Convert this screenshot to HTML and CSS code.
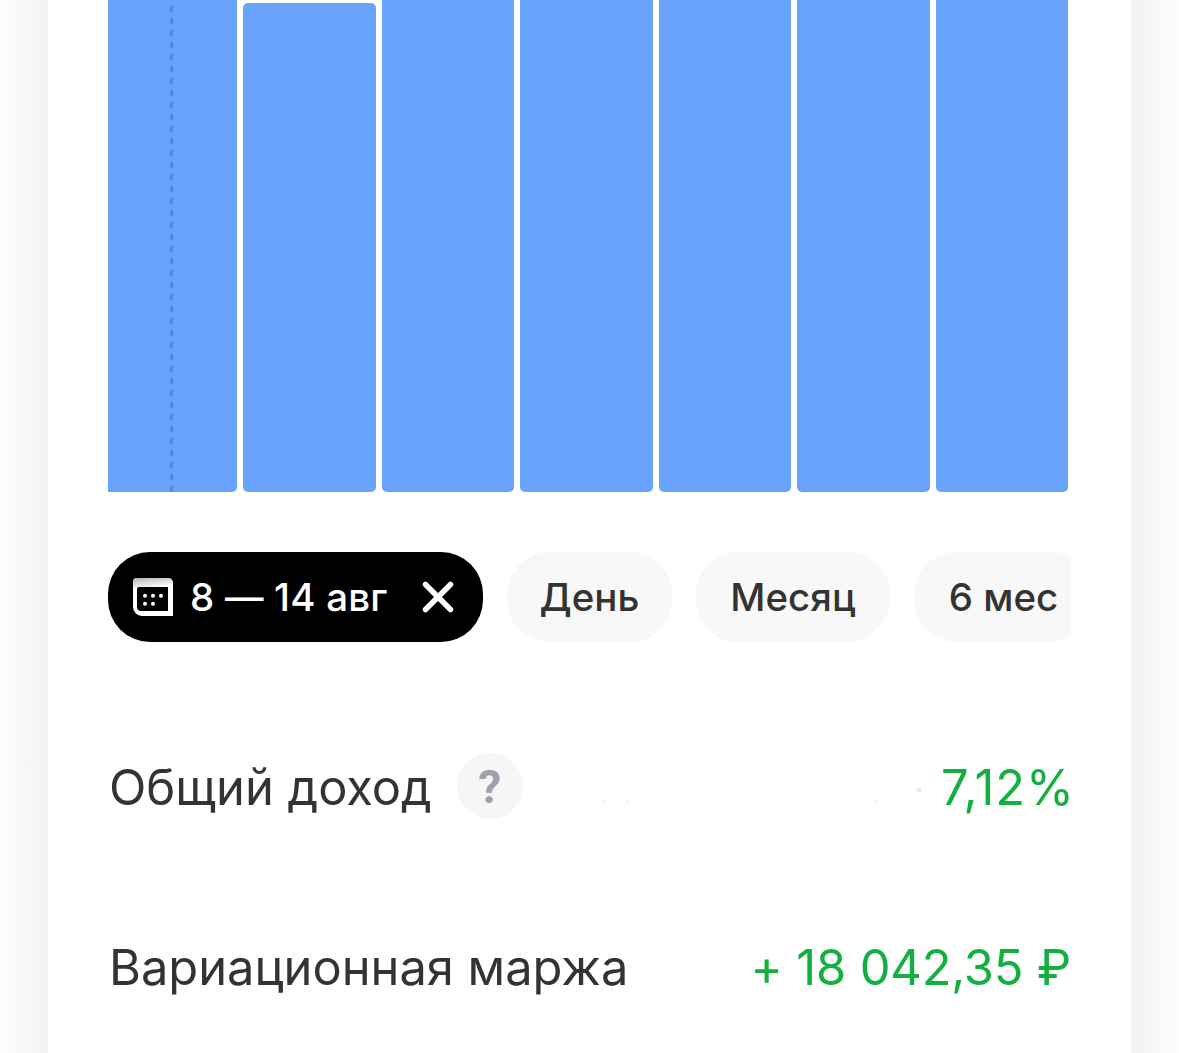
FILE: index.html
```html
<!DOCTYPE html>
<html lang="en">
<head>
  <meta charset="UTF-8">
  <title>Общий доход</title>
  <link rel="stylesheet" href="styles.css">
</head>
<body>

  <div class="card">
    <div class="chart">
      <div class="bar bar-first"><span class="today-line"></span></div>
      <div class="bar bar-short"></div>
      <div class="bar"></div>
      <div class="bar"></div>
      <div class="bar"></div>
      <div class="bar"></div>
      <div class="bar"></div>
    </div>

    <div class="pills">
      <div class="pill pill-active">
        <svg class="cal-icon" width="40" height="38" viewBox="0 0 40 38">
          <defs>
            <linearGradient id="calTop" x1="0" y1="0" x2="0.5" y2="1">
              <stop offset="0" stop-color="#b4b4b4"/>
              <stop offset="1" stop-color="#fff"/>
            </linearGradient>
          </defs>
          <path d="M4 0H35a5 5 0 0 1 5 5V38H9a9 9 0 0 1-9-9V4a4 4 0 0 1 4-4Z" fill="#fff"/>
          <path d="M4 0H35a5 5 0 0 1 5 5V10H0V4a4 4 0 0 1 4-4Z" fill="url(#calTop)"/>
          <path d="M6 9H35V33H8a4 4 0 0 1-4-4V11a2 2 0 0 1 2-2Z" fill="#000"/>
          <g fill="#fff">
            <circle cx="12" cy="17.7" r="2"/>
            <circle cx="20" cy="17.7" r="2"/>
            <circle cx="28" cy="17.7" r="2"/>
            <circle cx="12" cy="25.7" r="2"/>
            <circle cx="20" cy="25.7" r="2"/>
          </g>
        </svg>
        <span class="pill-text">8 — 14 авг</span>
        <svg class="close-icon" width="32" height="32" viewBox="0 0 32 32">
          <path d="M3.5 3.5L28.5 28.5M28.5 3.5L3.5 28.5" stroke="#fff" stroke-width="5.5" stroke-linecap="round"/>
        </svg>
      </div>
      <div class="pill">День</div>
      <div class="pill pill-wide">Месяц</div>
      <div class="pill pill-wide">6 мес</div>
    </div>

    <div class="row row-income">
      <div class="row-label">
        <span class="row-text">Общий доход</span>
        <span class="help">?</span>
      </div>
      <svg class="specks" width="340" height="30" viewBox="0 0 340 30">
        <circle cx="9" cy="20" r="2" fill="#f4f6f5"/>
        <circle cx="32" cy="21" r="2" fill="#f4f6f5"/>
        <circle cx="280" cy="20" r="2" fill="#f4f6f5"/>
        <circle cx="324" cy="9" r="2.5" fill="#e6eeea"/>
      </svg>
      <span class="row-text row-value row-percent">7,12%</span>
    </div>

    <div class="row row-margin">
      <span class="row-text row-name">Вариационная маржа</span>
      <span class="row-text row-value row-sum">+ 18 042,35 ₽</span>
    </div>
  </div>

</body>
</html>
```

FILE: styles.css
```css
html, body {
  height: 100%;
}

body {
  margin: 0;
  font-family: Inter, "Noto Sans", sans-serif;
  overflow: hidden;
  background:
    linear-gradient(to right, #fdfdfd, #f2f2f2) left top / 48px 100% no-repeat,
    linear-gradient(to left, #fdfdfd, #f2f2f2) right top / 48px 100% no-repeat,
    #fff;
}

.card {
  width: 1083px;
  height: 1053px;
  margin-left: 48px;
  padding: 0 60px;
  box-sizing: border-box;
  background: #fff;
}

.chart {
  display: flex;
  gap: 6.4px;
  width: 960px;
  height: 492px;
}

.bar {
  flex: 1;
  background: #6aa3fb;
  border-radius: 0 0 5px 5px;
}

.bar-first {
  flex: 0 0 129px;
  position: relative;
  border-radius: 0 0 5px 0;
}

.bar-short {
  margin-top: 3px;
  border-radius: 5px;
}

.today-line {
  position: absolute;
  left: 62px;
  top: 6px;
  bottom: 0;
  width: 3px;
  background: repeating-linear-gradient(#5189e2 0, #5189e2 6px, transparent 6px, transparent 12px);
}

.pills {
  display: flex;
  gap: 24px;
  width: 963px;
  margin-top: 60px;
  overflow: hidden;
}

.pill {
  flex: none;
  height: 90px;
  padding: 0 32.5px;
  display: flex;
  align-items: center;
  background: #f8f8f8;
  border-radius: 42px;
  color: #333;
  font-size: 38.5px;
  font-weight: 500;
}

.pill-wide {
  padding: 0 34.5px;
}

.pill-active {
  width: 375px;
  padding: 0 29px 0 25px;
  box-sizing: border-box;
  background: #000;
  color: #fff;
}

.pill-text {
  margin-left: 17px;
  flex: 1;
  letter-spacing: 0.2px;
}

.row {
  position: relative;
  display: flex;
  justify-content: space-between;
  align-items: center;
  color: #333;
  font-size: 48.8px;
  width: 963px;
}

.row-label {
  display: flex;
  align-items: center;
  gap: 25px;
  margin-left: 1px;
}

.row-text {
  padding-top: 2px;
}

.row-income {
  margin-top: 111px;
  height: 66px;
}

.row-margin {
  margin-top: 114px;
  height: 66px;
}

.row-name {
  margin-left: 1px;
}

.help {
  width: 66px;
  height: 66px;
  padding-top: 2px;
  box-sizing: border-box;
  border-radius: 50%;
  background: #f6f6f6;
  color: #a0a0aa;
  font-family: Roboto, sans-serif;
  font-size: 46px;
  font-weight: 700;
  display: flex;
  align-items: center;
  justify-content: center;
}

.specks {
  position: absolute;
  left: 487px;
  top: 28px;
}

.row-value {
  color: #13b03f;
}

.row-percent {
  letter-spacing: 1px;
  margin-right: -4px;
}

.row-sum {
  letter-spacing: -0.15px;
}
```
